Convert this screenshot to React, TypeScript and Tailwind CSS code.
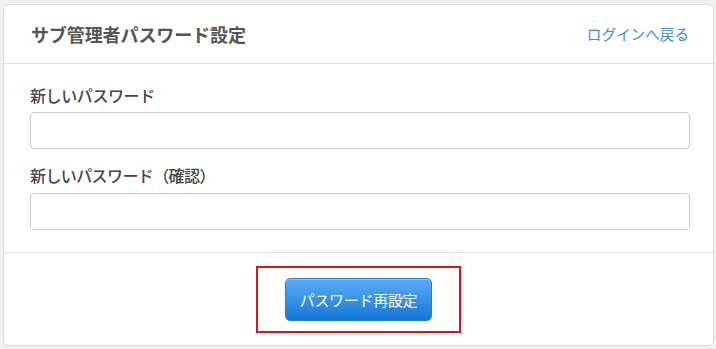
import React from "react";

export default function App() {
  const font = { fontFamily: '"Noto Sans CJK JP", "Noto Sans", sans-serif' };
  return (
    <div className="w-[716px] h-[349px] bg-[#f1f1f1] pt-[4px] pl-[3px] pr-[2px]" style={font}>
      <div className="h-[342px] bg-white border border-[#dcdcdc] rounded-[6px] flex flex-col">
        <div className="h-[59px] shrink-0 border-b border-[#dddddd] flex items-center justify-between pl-[27px] pr-[24px]">
          <div className="text-[18px] font-bold text-[#555555] leading-none tracking-[-0.1px]">サブ管理者パスワード設定</div>
          <a className="text-[14.6px] text-[#3a8ed2] leading-none">ログインへ戻る</a>
        </div>
        <div className="flex flex-col pt-[19px] pb-[22px] pl-[26px] pr-[23px] border-b border-[#dddddd]">
          <label className="text-[16px] leading-[24px] text-[#444444] font-medium tracking-[-0.4px]">新しいパスワード</label>
          <input type="password" className="mt-[5px] h-[37px] w-full border border-[#cccccc] rounded-[4px] bg-white outline-none" />
          <label className="mt-[14px] text-[16px] leading-[24px] text-[#444444] font-medium tracking-[-0.6px]">新しいパスワード（確認）</label>
          <input type="password" className="mt-[6px] h-[37px] w-full border border-[#cccccc] rounded-[4px] bg-white outline-none" />
        </div>
        <div className="flex-1 flex items-center justify-center">
          <div className="border-2 border-[#d8151b] w-[205px] h-[67px] flex items-center justify-center">
            <button className="w-[147px] h-[43px] rounded-[5px] border border-[#2a80d0] bg-gradient-to-b from-[#58adf4] to-[#0f76d8] text-white text-[15px] leading-none tracking-[-0.3px] shadow-[inset_0_1px_0_rgba(255,255,255,0.35)]">
              パスワード再設定
            </button>
          </div>
        </div>
      </div>
    </div>
  );
}
